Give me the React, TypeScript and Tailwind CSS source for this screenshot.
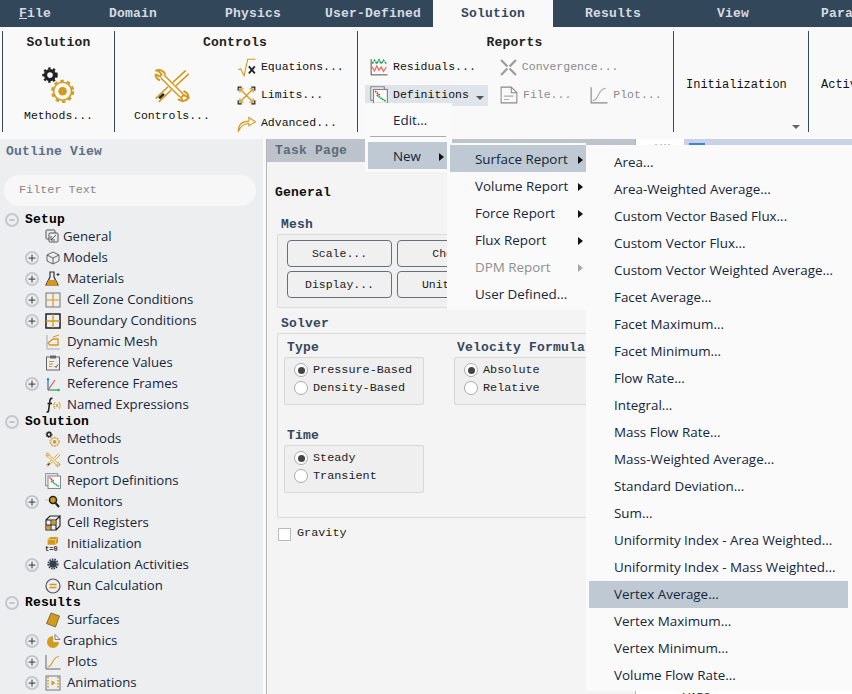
import { Minus, Plus } from "lucide-react";
import { ReactNode } from "react";

const mono = "font-['Liberation_Mono',monospace]";
const sans = "font-['Open_Sans',sans-serif]";
const gold = "#d29a1e";

type TreeItem = { label: string; icon: string; expand?: boolean; narrow?: boolean };

const setupItems: TreeItem[] = [
  { label: "General", icon: "general", narrow: true },
  { label: "Models", icon: "cube", expand: true, narrow: true },
  { label: "Materials", icon: "flask", expand: true },
  { label: "Cell Zone Conditions", icon: "gridLight", expand: true },
  { label: "Boundary Conditions", icon: "gridDark", expand: true },
  { label: "Dynamic Mesh", icon: "dynamic" },
  { label: "Reference Values", icon: "clipboard" },
  { label: "Reference Frames", icon: "axes", expand: true },
  { label: "Named Expressions", icon: "fx" },
];

const solutionItems: TreeItem[] = [
  { label: "Methods", icon: "gears" },
  { label: "Controls", icon: "tools" },
  { label: "Report Definitions", icon: "chart" },
  { label: "Monitors", icon: "search", expand: true },
  { label: "Cell Registers", icon: "cells" },
  { label: "Initialization", icon: "init" },
  { label: "Calculation Activities", icon: "cog", expand: true, narrow: true },
  { label: "Run Calculation", icon: "run" },
];

const resultItems: TreeItem[] = [
  { label: "Surfaces", icon: "surface" },
  { label: "Graphics", icon: "pie", expand: true, narrow: true },
  { label: "Plots", icon: "plot", expand: true },
  { label: "Animations", icon: "film", expand: true },
];

const surfaceReports = [
  "Area...",
  "Area-Weighted Average...",
  "Custom Vector Based Flux...",
  "Custom Vector Flux...",
  "Custom Vector Weighted Average...",
  "Facet Average...",
  "Facet Maximum...",
  "Facet Minimum...",
  "Flow Rate...",
  "Integral...",
  "Mass Flow Rate...",
  "Mass-Weighted Average...",
  "Standard Deviation...",
  "Sum...",
  "Uniformity Index - Area Weighted...",
  "Uniformity Index - Mass Weighted...",
  "Vertex Average...",
  "Vertex Maximum...",
  "Vertex Minimum...",
  "Volume Flow Rate...",
];

function Svg({ size = 16, children }: { size?: number; children: ReactNode }) {
  return (
    <svg width={size} height={size} viewBox="0 0 16 16" fill="none" className="shrink-0">
      {children}
    </svg>
  );
}

function Gears({ size = 16 }: { size?: number }) {
  return (
    <Svg size={size}>
      <circle cx="4" cy="3.6" r="2" stroke="#222" strokeWidth="1.5" />
      <circle cx="4" cy="3.6" r="3" stroke="#222" strokeWidth="0.9" strokeDasharray="1.1 1.1" />
      <circle cx="9.6" cy="10.8" r="4" stroke={gold} strokeWidth="0.7" />
      <circle cx="9.6" cy="10.8" r="4.7" stroke={gold} strokeWidth="0.9" strokeDasharray="1.6 1.4" />
      <circle cx="9.6" cy="10.8" r="1.9" fill={gold} />
    </Svg>
  );
}

function Tools({ size = 16 }: { size?: number }) {
  return (
    <Svg size={size}>
      {/* wrench */}
      <path d="M4 4 L12 12" stroke={gold} strokeWidth="2.5" />
      <path d="M1.6 1.2 L3.6 3 L3 4 L1 3 M12.6 14.8 L11.8 12.8 L13 11.8 L15 13 A3 3 0 0 1 10.5 13.5 M5.2 3.2 A3 3 0 0 0 1 1.6 M1 3 A3 3 0 0 0 3 5.6 M15 13 A3 3 0 0 0 12.8 10.2" stroke={gold} strokeWidth="0.8" />
      <path d="M4 4 L12 12" stroke="#fff" strokeWidth="1.2" />
      {/* screwdriver */}
      <path d="M14.4 2.2 L9 7.2 M7 9 L1.8 14" stroke={gold} strokeWidth="2.6" />
      <path d="M14.4 2.2 L9 7.2 M7 9 L1.8 14" stroke="#fff" strokeWidth="1.2" />
      <path d="M2.6 13.2 L4.6 11.3" stroke="#222" strokeWidth="1.1" />
    </Svg>
  );
}

function ResidualChart({ size = 18 }: { size?: number }) {
  return (
    <Svg size={size}>
      <path d="M1 1 V15 H15.5" stroke="#222" strokeWidth="0.7" />
      <path d="M2 5 L4 2 L6 5 L8 1.5 L10 5 L12 2 L14.5 5" stroke="#1f9d55" strokeWidth="1.3" strokeDasharray="2 0.6" />
      <path d="M2 8 L4 11.5 L6 7 L8 11 L10 8 L12 12 L14.5 8" stroke="#ef6a5a" strokeWidth="1.1" />
    </Svg>
  );
}

function DefinitionChart({ size = 18 }: { size?: number }) {
  return (
    <Svg size={size}>
      <rect x="0.7" y="0.7" width="12" height="12" fill="#eef0f3" stroke="#777" strokeWidth="0.8" />
      <rect x="3" y="3" width="12.4" height="12.4" fill="#fbfbfb" stroke="#777" strokeWidth="0.9" />
      <path d="M4.5 4.5 L9 8.5" stroke="#e53935" strokeWidth="1.5" strokeDasharray="1.5 0.5" />
      <path d="M6 8 L10 11 L14 13.5" stroke="#14a84a" strokeWidth="1.5" strokeDasharray="1.5 0.5" />
    </Svg>
  );
}

function TreeIcon({ name }: { name: string }) {
  switch (name) {
    case "general":
      return (
        <Svg>
          <rect x="1" y="1" width="9" height="9" rx="1" stroke="#555" />
          <rect x="4" y="4" width="9" height="9" rx="1" fill="#eceef0" stroke="#555" />
          <path d="M6 11 L11 6 M6 7 V11 H10" stroke="#555" />
        </Svg>
      );
    case "cube":
      return (
        <Svg>
          <path d="M8 2 L14 5 V11 L8 14 L2 11 V5 Z M2 5 L8 8 L14 5 M8 8 V14" stroke="#555" strokeWidth="0.9" />
        </Svg>
      );
    case "flask":
      return (
        <Svg>
          <path d="M5 1 H9 V6 L13 14 H1 L5 6 Z" stroke="#333" strokeWidth="1.2" />
          <path d="M3.5 9 H10.5 L13 14.5 H1 Z" fill={gold} />
          <path d="M13 2 V5 M11.5 3.5 H14.5" stroke="#333" />
        </Svg>
      );
    case "gridLight":
      return (
        <Svg>
          <rect x="1" y="1" width="14" height="14" stroke="#777" />
          <path d="M8 1 V15 M1 8 H15" stroke={gold} strokeWidth="1.2" />
        </Svg>
      );
    case "gridDark":
      return (
        <Svg>
          <rect x="1" y="1" width="14" height="14" stroke="#111" strokeWidth="1.4" />
          <path d="M8 1 V15 M1 8 H15" stroke={gold} strokeWidth="1.3" />
        </Svg>
      );
    case "dynamic":
      return (
        <Svg>
          <path d="M2 1 V15 H15" stroke="#aaa" />
          <path d="M3 9 L8 5 H13 V11 H5 Z" stroke={gold} strokeWidth="1.3" />
          <path d="M8 3 L14 1" stroke={gold} />
        </Svg>
      );
    case "clipboard":
      return (
        <Svg>
          <rect x="1.5" y="2" width="13" height="13" stroke="#666" />
          <rect x="5" y="0.5" width="6" height="3" fill="#666" />
          <path d="M4 6.5 H9 M4 9 H8 M4 11.5 H7" stroke={gold} strokeWidth="1.1" />
          <path d="M9.5 11 L11 12.5 L13 9.5" stroke="#555" />
        </Svg>
      );
    case "axes":
      return (
        <Svg>
          <path d="M3 14 V3" stroke="#1677c9" strokeWidth="1.2" />
          <path d="M3 14 H14" stroke="#1f9d55" strokeWidth="1.2" />
          <path d="M3 14 L10 4" stroke="#e8504a" strokeWidth="1.2" />
          <path d="M1.5 4 L3 1.5 L4.5 4 Z" fill="#1677c9" />
          <path d="M13 12.5 L15.5 14 L13 15.5 Z" fill="#1f9d55" />
        </Svg>
      );
    case "fx":
      return (
        <Svg>
          <path d="M7.5 1.5 C5 1 5 3 4.6 6 L3.5 14 C3.3 15 2.5 15.2 1.5 15 M2.5 6.5 H7" stroke="#222" strokeWidth="1.6" />
          <path d="M10 5 C8.5 7 8.5 10 10 12 M14 5 C15.5 7 15.5 10 14 12 M10.8 6.8 L13.2 10.2 M13.2 6.8 L10.8 10.2" stroke={gold} strokeWidth="0.9" />
        </Svg>
      );
    case "gears":
      return <Gears />;
    case "tools":
      return <Tools />;
    case "chart":
      return <DefinitionChart size={16} />;
    case "search":
      return (
        <Svg>
          <circle cx="8" cy="6" r="3.5" fill={gold} stroke="#222" strokeWidth="1.6" />
          <path d="M10.5 9 L14 13" stroke="#222" strokeWidth="2" />
          <path d="M0.5 6 H3" stroke={gold} strokeDasharray="1 1" />
        </Svg>
      );
    case "cells":
      return (
        <Svg>
          <path d="M1 5 H11 V15 H1 Z M11 5 L15 1 V11 L11 15 M1 5 L5 1 H15" stroke="#222" strokeWidth="1.1" />
          <rect x="1.5" y="10" width="4" height="4.5" fill={gold} />
          <rect x="6.5" y="5.5" width="4" height="4" fill={gold} />
          <path d="M1 10 H11 M6 5 V15" stroke="#222" strokeWidth="0.9" />
        </Svg>
      );
    case "init":
      return (
        <div className="relative h-[16px] w-[16px]">
          <Svg size={14}>
            <path d="M3 4 L6 1 H15 V7 L12 10 H3 Z" fill={gold} />
            <path d="M3 4 H12 V10 M12 4 L15 1" stroke="#f1d48c" strokeWidth="0.8" />
          </Svg>
          <span className={`${mono} absolute left-0 top-[10px] text-[7px] leading-[7px] font-bold text-[#333]`}>t=0</span>
        </div>
      );
    case "cog":
      return (
        <Svg>
          <circle cx="8" cy="7" r="3.8" fill="#33404d" />
          <circle cx="8" cy="7" r="4.8" stroke="#33404d" strokeWidth="1.6" strokeDasharray="1.6 1" />
        </Svg>
      );
    case "run":
      return (
        <Svg>
          <circle cx="8" cy="8" r="7" stroke="#555" strokeWidth="1.2" />
          <path d="M4.5 6.5 H11.5 M4.5 9.5 H11.5" stroke={gold} strokeWidth="1.5" />
        </Svg>
      );
    case "surface":
      return (
        <Svg>
          <path d="M6 1 L14.5 4 L10.5 15 L1.5 11.5 Z" fill={gold} stroke="#6b5a2a" strokeWidth="0.8" strokeLinejoin="round" />
        </Svg>
      );
    case "pie":
      return (
        <Svg>
          <path d="M8 3 A6 6 0 1 0 14 9 H8 Z" fill={gold} />
          <path d="M10 1.5 L15 6.5 H10 Z" fill="#f4f4f4" stroke="#666" strokeWidth="0.8" />
        </Svg>
      );
    case "plot":
      return (
        <Svg>
          <path d="M1 1 V15 H15.5" stroke="#666" />
          <path d="M2.5 13 C8 13 7 2.5 14 2.5" stroke={gold} strokeWidth="1.1" />
        </Svg>
      );
    case "film":
      return (
        <Svg>
          <rect x="1" y="1" width="14" height="14" stroke="#777" />
          <path d="M3 2 V14 M13 2 V14" stroke={gold} strokeWidth="1.6" strokeDasharray="1.5 1.5" />
          <path d="M6.5 5.5 L10.5 8 L6.5 10.5 Z" fill={gold} />
        </Svg>
      );
    default:
      return null;
  }
}

function Expander({ open }: { open?: boolean }) {
  return (
    <span className="flex h-[14px] w-[14px] items-center justify-center rounded-full border-2 border-[#c4c8cc] bg-[#eceef0]">
      {open ? <Minus size={8} strokeWidth={2} color="#777" /> : <Plus size={10} strokeWidth={3} color="#555" />}
    </span>
  );
}

function TreeSection({ title, items }: { title: string; items: TreeItem[] }) {
  return (
    <div>
      <div className="flex h-[13px] items-center pl-[5px]">
        <Expander open />
        <span className={`${mono} ml-[6px] text-[13px] font-bold tracking-[0.2px] text-black`}>{title}</span>
      </div>
      {items.map((item) => (
        <div key={item.label} className="flex h-[21px] items-center pl-[25px]">
          <span className="w-[20px]">{item.expand && <Expander />}</span>
          <TreeIcon name={item.icon} />
          <span className={`${sans} whitespace-nowrap text-[13.2px] text-[#15263a] ${item.narrow ? "ml-[2px]" : "ml-[6px]"}`}>
            {item.label}
          </span>
        </div>
      ))}
    </div>
  );
}

function RibbonButton({ icon, label, disabled }: { icon: ReactNode; label: string; disabled?: boolean }) {
  return (
    <div className="flex h-[21px] items-center gap-[5px]">
      {icon}
      <span className={`${mono} whitespace-nowrap text-[11.5px] ${disabled ? "text-[#8a8a8a]" : "text-[#111]"}`}>{label}</span>
    </div>
  );
}

function MeshButton({ label }: { label: string }) {
  return (
    <div className={`${mono} flex h-[27px] w-[105px] items-center justify-center rounded-[4px] border border-[#66707a] text-[11.5px] text-[#222]`}>
      {label}
    </div>
  );
}

function Radio({ label, checked }: { label: string; checked?: boolean }) {
  return (
    <div className="flex h-[18px] items-center gap-[5px]">
      <span className="flex h-[14px] w-[14px] items-center justify-center rounded-full border border-[#aaa] bg-white">
        {checked && <span className="h-[7px] w-[7px] rounded-full bg-[#444]" />}
      </span>
      <span className={`${mono} pt-[1px] text-[11.8px] text-[#222]`}>{label}</span>
    </div>
  );
}

function RadioGroup({ title, options, className = "" }: { title: string; options: string[]; className?: string }) {
  return (
    <div className={className}>
      <div className={`${mono} pl-[3px] pt-[1px] text-[13px] leading-[17px] font-bold tracking-[0.2px] text-[#34495e]`}>{title}</div>
      <div className="mt-[1px] h-[48px] w-[140px] rounded-[2px] border border-[#d6d6d6] bg-[#efefef] px-[9px] pt-[3px]">
        {options.map((o, i) => (
          <Radio key={o} label={o} checked={i === 0} />
        ))}
      </div>
    </div>
  );
}

function MenuArrow({ disabled }: { disabled?: boolean }) {
  return (
    <span className={`ml-auto h-0 w-0 border-y-[4px] border-l-[5px] border-y-transparent ${disabled ? "border-l-[#a8a8a8]" : "border-l-[#111]"}`} />
  );
}

function MenuRow({ label, active, disabled, arrow, pad }: { label: string; active?: boolean; disabled?: boolean; arrow?: boolean; pad: string }) {
  return (
    <div className={`${sans} flex h-[27px] items-center whitespace-nowrap text-[13.4px] ${pad} ${active ? "bg-[#bfc9d3]" : ""} ${disabled ? "text-[#8f8f8f]" : "text-[#15263a]"}`}>
      {label}
      {arrow && <MenuArrow disabled={disabled} />}
    </div>
  );
}

export default function App() {
  return (
    <div className="relative h-[694px] w-[852px] overflow-hidden bg-[#f9f9f9]">
      {/* tabs */}
      <div className={`${mono} flex h-[27px] bg-[#33475b] text-[13px] font-bold tracking-[0.2px] text-[#d5dbe1]`}>
        <div className="flex w-[73px] shrink-0 items-center pl-[19px]">
          <span>
            <span className="underline">F</span>ile
          </span>
        </div>
        {["Domain", "Physics", "User-Defined"].map((t) => (
          <div key={t} className="flex w-[120px] shrink-0 items-center justify-center">{t}</div>
        ))}
        <div className="flex w-[120px] shrink-0 items-center justify-center bg-[#f9f9f9] text-[#34495e]">Solution</div>
        {["Results", "View", "Parallel"].map((t) => (
          <div key={t} className="flex w-[120px] shrink-0 items-center justify-center">{t}</div>
        ))}
      </div>

      {/* ribbon */}
      <div className="flex h-[112px] pl-[2px] pt-[4px]">
        <div className="flex h-[101px] w-[112px] shrink-0 flex-col items-center border-l border-[#34495e]">
          <div className={`${mono} mt-[2px] text-[13px] font-bold tracking-[0.2px] text-[#222]`}>Solution</div>
          <div className="mt-[14px]">
            <Gears size={36} />
          </div>
          <div className={`${mono} mt-[4px] text-[11.5px] text-[#111]`}>Methods...</div>
        </div>
        <div className="flex h-[101px] w-[243px] shrink-0 flex-col border-l border-[#34495e]">
          <div className={`${mono} mt-[2px] pr-[2px] text-center text-[13px] font-bold tracking-[0.2px] text-[#222]`}>Controls</div>
          <div className="flex">
            <div className="ml-[19px] flex flex-col items-center">
              <div className="mt-[14px]">
                <Tools size={38} />
              </div>
              <div className={`${mono} mt-[2px] text-[11.5px] text-[#111]`}>Controls...</div>
            </div>
            <div className="ml-[27px] mt-[4px] flex flex-col gap-[7px]">
              <RibbonButton
                label="Equations..."
                icon={
                  <Svg size={19}>
                    <path d="M1 10 L3 9 L6 15 L9 1 H15.5" stroke={gold} strokeWidth="0.9" />
                    <path d="M10 7 L15 13 M15 7 L10 13" stroke="#222" strokeWidth="1.5" />
                  </Svg>
                }
              />
              <RibbonButton
                label="Limits..."
                icon={
                  <Svg size={19}>
                    <path d="M1 4 V1 H4 M12 1 H15 V4 M15 12 V15 H12 M4 15 H1 V12" stroke="#222" strokeWidth="1" />
                    <path d="M3 3 L13 13 M13 3 L3 13" stroke={gold} strokeWidth="1.1" />
                    <path d="M2.5 5.5 V2.5 H5.5 M10.5 2.5 H13.5 V5.5 M13.5 10.5 V13.5 H10.5 M5.5 13.5 H2.5 V10.5" stroke={gold} strokeWidth="1.1" />
                  </Svg>
                }
              />
              <RibbonButton
                label="Advanced..."
                icon={
                  <Svg size={19}>
                    <path d="M1 15 C1 9 4 6 10 6 V3 L15.5 6.5 L10 10 V8 C6 8 3 10 1 15 Z" stroke={gold} strokeWidth="0.9" />
                  </Svg>
                }
              />
            </div>
          </div>
        </div>
        <div className="flex h-[101px] w-[316px] shrink-0 flex-col border-l border-[#34495e]">
          <div className={`${mono} mt-[2px] pr-[2px] text-center text-[13px] font-bold tracking-[0.2px] text-[#222]`}>Reports</div>
          <div className="mt-[4px] flex pl-[12px]">
            <RibbonButton label="Residuals..." icon={<ResidualChart />} />
            <div className="ml-[24px]">
              <RibbonButton
                disabled
                label="Convergence..."
                icon={
                  <Svg size={17}>
                    <path d="M1 1 L7 7 M15 1 L9 7 M1 15 L7 9 M15 15 L9 9" stroke="#9a9a9a" strokeWidth="2" />
                  </Svg>
                }
              />
            </div>
          </div>
          <div className="mt-[7px] flex pl-[7px]">
            <div className="flex h-[21px] w-[123px] items-center bg-[#dfe4ea] pl-[5px]">
              <RibbonButton label="Definitions" icon={<DefinitionChart />} />
              <span className="ml-[7px] mt-[6px] h-0 w-0 border-x-[4px] border-t-[4px] border-x-transparent border-t-[#555]" />
            </div>
            <div className="ml-[12px]">
              <RibbonButton
                disabled
                label="File..."
                icon={
                  <Svg size={18}>
                    <path d="M1 1 H10 L15 6 V15 H1 Z M10 1 V6 H15" stroke="#888" strokeWidth="0.9" />
                    <path d="M3.5 9 H12 M3.5 12 H8" stroke="#aaa" />
                  </Svg>
                }
              />
            </div>
            <div className="ml-[19px]">
              <RibbonButton
                disabled
                label="Plot..."
                icon={
                  <Svg size={18}>
                    <path d="M1 1 V15 H15.5" stroke="#888" />
                    <path d="M2.5 13 C8 13 7 2 14 2" stroke="#aaa" />
                  </Svg>
                }
              />
            </div>
          </div>
        </div>
        <div className="relative h-[101px] w-[135px] shrink-0 border-l border-[#34495e]">
          <div className={`${mono} pl-[12px] pt-[45px] text-[12px] text-[#111]`}>Initialization</div>
          <span className="absolute bottom-[3px] right-[8px] h-0 w-0 border-x-[4px] border-t-[4px] border-x-transparent border-t-[#666]" />
        </div>
        <div className="h-[101px] flex-1 border-l border-[#34495e]">
          <div className={`${mono} whitespace-nowrap pl-[12px] pt-[45px] text-[12px] text-[#111]`}>Activities</div>
        </div>
      </div>

      {/* body */}
      <div className="flex h-[555px]">
        <div className="w-[263px] shrink-0 bg-[#eceef0] pl-[4px]">
          <div className={`${mono} pl-[2px] pt-[3px] text-[13px] font-bold tracking-[0.2px] text-[#5c7088]`}>Outline View</div>
          <div className={`${mono} mt-[13px] flex h-[31px] w-[252px] items-center rounded-full bg-[#f7f7f7] pl-[15px] pt-[1px] text-[11.8px] text-[#888]`}>Filter Text</div>
          <div className="-ml-[4px] mt-[8px]">
            <TreeSection title="Setup" items={setupItems} />
            <TreeSection title="Solution" items={solutionItems} />
            <TreeSection title="Results" items={resultItems} />
          </div>
        </div>

        <div className="ml-[3px] w-[370px] shrink-0 border-x border-[#b5b5b5] bg-[#f4f4f4]">
          <div className={`${mono} flex h-[23px] items-center bg-[#bdc3ca] pl-[8px] pt-[1px] text-[13px] font-bold tracking-[0.2px] text-[#5c6b7b]`}>Task Page</div>
          <div className="pl-[10px]">
            <div className={`${mono} -ml-[2px] pt-[21px] text-[13px] leading-[20px] font-bold tracking-[0.2px] text-[#111]`}>General</div>
            <div className={`${mono} mt-[12px] pl-[4px] text-[13px] leading-[19px] font-bold tracking-[0.2px] text-[#34495e]`}>Mesh</div>
            <div className="h-[74px] w-[350px] rounded-[2px] border border-[#dadada] bg-[#f0f0f0] pl-[9px] pt-[5px]">
              <div className="flex gap-[5px]">
                <MeshButton label="Scale..." />
                <MeshButton label="Check" />
              </div>
              <div className="mt-[4px] flex gap-[5px]">
                <MeshButton label="Display..." />
                <MeshButton label="Units..." />
              </div>
            </div>
            <div className={`${mono} mt-[6px] pl-[4px] pt-[1px] text-[13px] leading-[18px] font-bold tracking-[0.2px] text-[#34495e]`}>Solver</div>
            <div className="h-[185px] w-[350px] rounded-[2px] border border-[#dadada] bg-[#f4f4f4] pl-[6px] pt-[4px]">
              <div className="flex gap-[30px]">
                <RadioGroup title="Type" options={["Pressure-Based", "Density-Based"]} />
                <RadioGroup title="Velocity Formulation" options={["Absolute", "Relative"]} />
              </div>
              <RadioGroup className="mt-[21px]" title="Time" options={["Steady", "Transient"]} />
            </div>
            <div className="mt-[9px] flex h-[14px] items-center">
              <span className="ml-[1px] h-[13px] w-[13px] border border-[#bbb] bg-white" />
              <span className={`${mono} ml-[6px] text-[11.8px] text-[#222]`}>Gravity</span>
            </div>
          </div>
        </div>

        <div className="relative flex-1 bg-white">
          <div className="absolute left-[19px] top-[5px] w-[15px] border-t-2 border-dotted border-[#c2c2c2]" />
          <div className="ml-[48px] h-[6px] bg-[#c8d2e4] pl-[5px] pt-[4px]">
            <div className="h-[2px] w-[16px] bg-[#3b82e6]" />
          </div>
          <div className={`${mono} absolute left-[47px] top-[552px] text-[11.5px] leading-[12px] text-[#222]`}>WARS</div>
        </div>
      </div>

      {/* open menus */}
      <div className="absolute left-[365px] top-[103px] z-10 h-[69px] w-[87px] bg-[#fafafa] pl-[3px] pt-[3px]">
        <div className={`${sans} flex h-[28px] items-center pl-[25px] text-[13.4px] text-[#15263a]`}>Edit...</div>
        <div className="ml-[2px] mt-[2px] h-px w-[76px] bg-[#aaa]" />
        <div className="mt-[5px] w-[79px]">
          <MenuRow label="New" active arrow pad="pl-[25px] pr-[3px] pt-[2px]" />
        </div>
      </div>
      <div className="absolute left-[447px] top-[143px] z-20 h-[167px] w-[139px] bg-[#fafafa] pl-[3px] pt-[2px]">
        <MenuRow label="Surface Report" active arrow pad="pl-[25px] pr-[3px] pt-[2px]" />
        <MenuRow label="Volume Report" arrow pad="pl-[25px] pr-[3px] pt-[2px]" />
        <MenuRow label="Force Report" arrow pad="pl-[25px] pr-[3px] pt-[2px]" />
        <MenuRow label="Flux Report" arrow pad="pl-[25px] pr-[3px] pt-[2px]" />
        <MenuRow label="DPM Report" disabled arrow pad="pl-[25px] pr-[3px] pt-[2px]" />
        <MenuRow label="User Defined..." pad="pl-[25px] pr-[3px] pt-[2px]" />
      </div>
      <div className="absolute left-[586px] top-[145px] z-30 h-[546px] w-[266px] bg-[#fafafa] py-[4px] pl-[3px] pr-[4px]">
        {surfaceReports.map((r) => (
          <MenuRow key={r} label={r} active={r === "Vertex Average..."} pad="pl-[25px]" />
        ))}
      </div>
    </div>
  );
}
